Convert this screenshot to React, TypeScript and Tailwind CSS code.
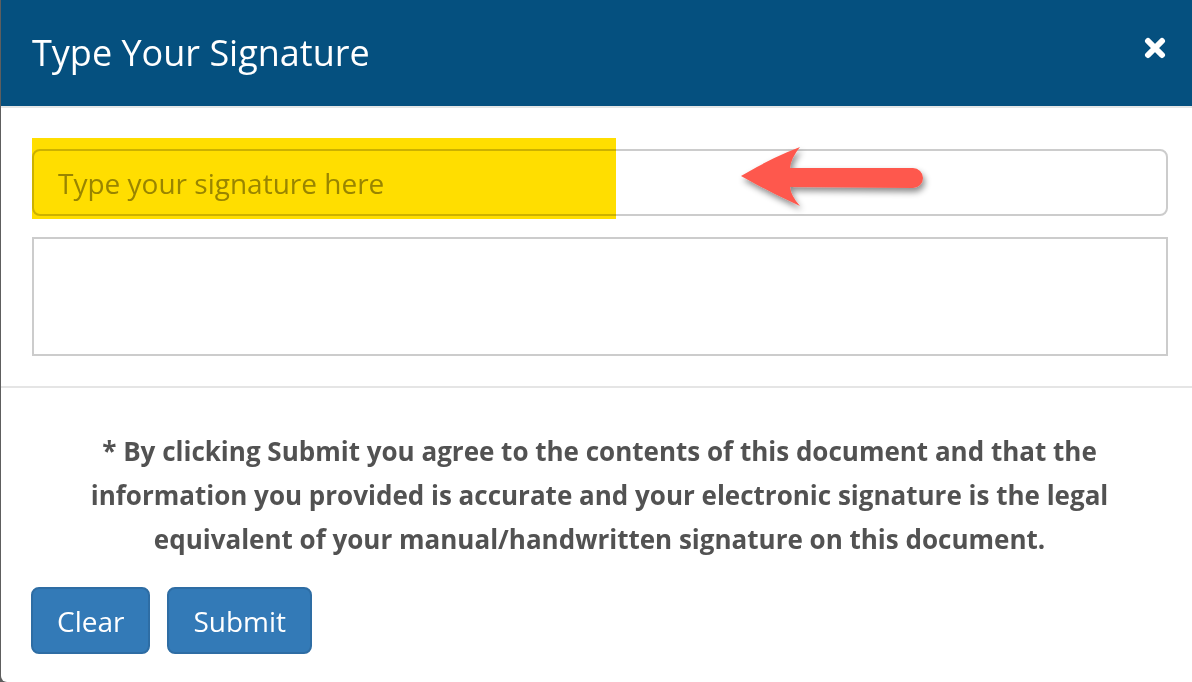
import React from 'react';

const font = { fontFamily: '"Open Sans", "Noto Sans", Arial, sans-serif' };

function CloseIcon() {
  return (
    <svg width="22" height="22" viewBox="0 0 22 22" className="block">
      <path d="M4 4 L18 18 M18 4 L4 18" stroke="white" strokeWidth="6" strokeLinecap="round" />
    </svg>
  );
}

function Arrow() {
  return (
    <svg
      width="1192"
      height="682"
      viewBox="0 0 1192 682"
      className="pointer-events-none absolute left-0 top-0"
    >
      <defs>
        <filter id="arrowShadow" x="-20%" y="-40%" width="140%" height="180%">
          <feDropShadow dx="2" dy="4" stdDeviation="3" floodColor="#000" floodOpacity="0.45" />
        </filter>
      </defs>
      <path
        d="M740 176 Q770 158 799 147 Q790 158 789 168 L912 168 A10 10 0 0 1 912 188 L789 187 Q790 196 799 206 Q770 193 740 176 Z"
        fill="#fe594d"
        filter="url(#arrowShadow)"
      />
    </svg>
  );
}

export default function App() {
  return (
    <div className="h-[682px] w-[1192px] overflow-hidden bg-[#5e5e5e]" style={font}>
      <div className="relative ml-[1px] h-[682px] overflow-hidden rounded-bl-[6px] bg-white">
        {/* Header */}
        <div className="flex h-[108px] items-center justify-between border-b-2 border-[#e4e6e6] bg-[#05507f] pl-[31px] pr-[26px]">
          <h4 className="text-[36px] font-normal leading-none text-white">Type Your Signature</h4>
          <button className="-mt-[10px]">
            <CloseIcon />
          </button>
        </div>

        {/* Body */}
        <div className="pl-[31px] pr-[24px] pt-[41px]">
          <div className="relative">
            <input
              type="text"
              placeholder="Type your signature here"
              className="block h-[67px] w-full rounded-[8px] border-2 border-[#cccccc] bg-white px-[24px] text-[28px] text-[#555] outline-none placeholder:text-[#999999]"
            />
            <div className="pointer-events-none absolute left-0 top-[-11px] h-[81px] w-[584px] bg-[#ffde00] mix-blend-multiply" />
          </div>
          <div className="mt-[21px] h-[119px] border-2 border-[#cccccc]" />
        </div>

        {/* Divider */}
        <div className="mt-[30px] h-[2px] bg-[#e5e5e5]" />

        {/* Footer */}
        <div className="pl-[30px] pr-[24px] pt-[41px]">
          <p className="text-center text-[26px] font-bold leading-[44px] text-[#525252]">
            * By clicking Submit you agree to the contents of this document and that the
            <br />
            information you provided is accurate and your electronic signature is the legal
            <br />
            equivalent of your manual/handwritten signature on this document.
          </p>
          <div className="mt-[26px] flex gap-[17px]">
            <button className="flex h-[67px] items-center rounded-[8px] border-2 border-[#2e6da4] bg-[#337ab7] px-[24px] text-[28px] text-white">
              Clear
            </button>
            <button className="flex h-[67px] items-center rounded-[8px] border-2 border-[#2e6da4] bg-[#337ab7] px-[24px] text-[28px] text-white">
              Submit
            </button>
          </div>
        </div>

        <Arrow />
      </div>
    </div>
  );
}
